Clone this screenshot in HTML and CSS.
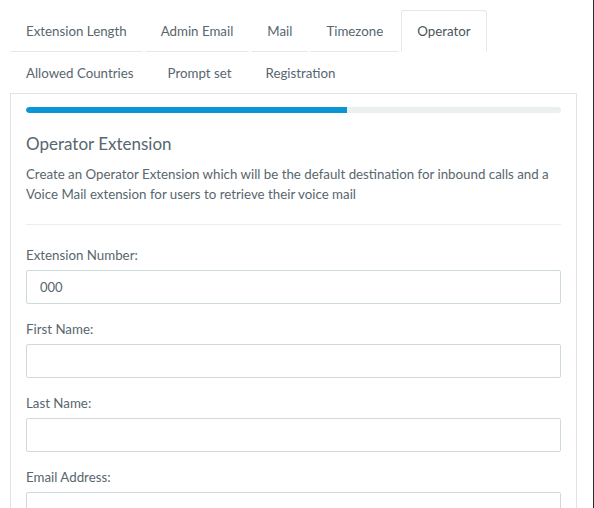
FILE: index.html
```html
<!DOCTYPE html>
<html lang="en">
<head>
  <meta charset="UTF-8">
  <meta name="viewport" content="width=device-width, initial-scale=1.0">
  <title>Setup Wizard</title>
  <link rel="stylesheet" href="styles.css">
</head>
<body>

  <div class="page">
    <!-- Wizard steps -->
    <ul class="tabs">
      <li class="tab">Extension Length</li>
      <li class="tab">Admin Email</li>
      <li class="tab">Mail</li>
      <li class="tab">Timezone</li>
      <li class="tab active">Operator</li>
      <li class="tab plain">Allowed Countries</li>
      <li class="tab plain">Prompt set</li>
      <li class="tab plain">Registration</li>
    </ul>

    <!-- Current step -->
    <div class="panel">
      <div class="progress">
        <div class="progress-bar" style="width: 60%;"></div>
      </div>

      <h3>Operator Extension</h3>
      <p class="intro">Create an Operator Extension which will be the default destination for inbound calls and a Voice Mail extension for users to retrieve their voice mail</p>

      <hr>

      <form class="step-form">
        <div class="field">
          <label for="extNumber">Extension Number:</label>
          <input type="text" id="extNumber" value="000">
        </div>
        <div class="field">
          <label for="firstName">First Name:</label>
          <input type="text" id="firstName">
        </div>
        <div class="field">
          <label for="lastName">Last Name:</label>
          <input type="text" id="lastName">
        </div>
        <div class="field">
          <label for="email">Email Address:</label>
          <input type="text" id="email">
        </div>
      </form>
    </div>
  </div>

</body>
</html>
```

FILE: styles.css
```css
* {
  box-sizing: border-box;
  margin: 0;
  padding: 0;
}

html, body {
  height: 100%;
}

body {
  font-family: Lato, 'Noto Sans', sans-serif;
  font-size: 13.3px;
  line-height: 20px;
  color: #58666e;
  background-color: #fff;
  overflow: hidden;
}

.page {
  width: 594px;
  min-height: 100%;
  padding: 10px 16px 0 10px;
  border-right: 1px solid #2b2b2b;
}

/* Step tabs */
.tabs {
  list-style: none;
  display: flex;
  flex-wrap: wrap;
  margin-bottom: -1px;
}

.tab {
  padding: 10px 15px;
  margin-right: 2px;
  border: 1px solid transparent;
  border-bottom-color: #e3e8ea;
  border-radius: 3px 3px 0 0;
  white-space: nowrap;
}

.tab.plain {
  border-bottom-color: transparent;
}

.tab.active {
  border-color: #e3e8ea;
  border-bottom-color: transparent;
  background-color: #fff;
  color: #4b565c;
}

/* Panel */
.panel {
  border: 1px solid #dee5e7;
  padding: 13px 15px 40px;
}

.progress {
  height: 6px;
  border-radius: 3px;
  background-color: #ecefef;
  overflow: hidden;
}

.progress-bar {
  height: 100%;
  background-color: #0a96d4;
  border-radius: 3px 0 0 3px;
}

h3 {
  font-size: 17px;
  font-weight: 400;
  line-height: 20px;
  color: #58666e;
  margin-top: 21px;
  margin-bottom: 10px;
}

hr {
  border: none;
  border-top: 1px solid #eceeef;
  margin: 20px 0;
}

.field {
  margin-bottom: 15px;
}

.field label {
  display: block;
  margin-bottom: 5px;
}

.field input {
  display: block;
  width: 100%;
  height: 34px;
  padding: 6px 13px;
  font-family: inherit;
  font-size: 13px;
  color: #58666e;
  border: 1px solid #cfdadd;
  border-radius: 2px;
  background-color: #fff;
}
```
